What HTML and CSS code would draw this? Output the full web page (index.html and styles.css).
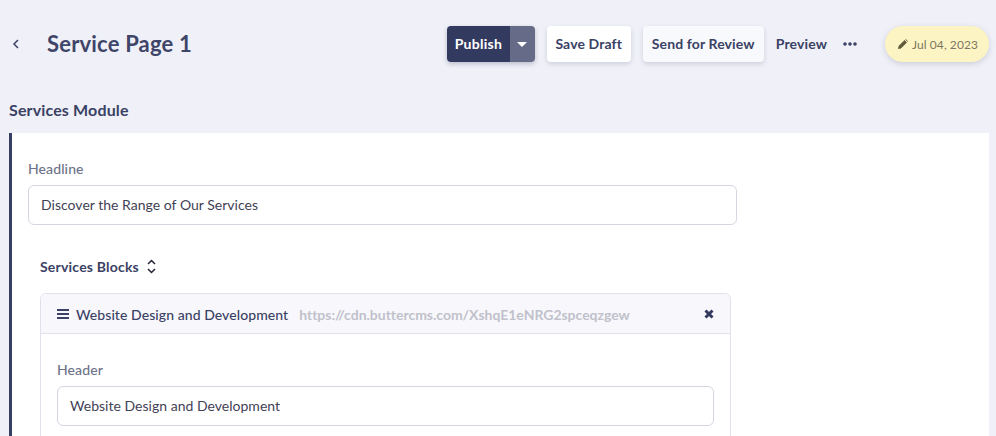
FILE: index.html
```html
<!DOCTYPE html>
<html lang="en">
<head>
<meta charset="utf-8">
<title>Service Page 1</title>
<link rel="stylesheet" href="styles.css">
</head>
<body>
<header class="topbar">
  <div class="title-group">
    <svg class="back" width="8" height="10" viewBox="0 0 8 10"><path d="M6 1 2 5l4 4" fill="none" stroke="#3a4164" stroke-width="1.5"/></svg>
    <h1 class="title">Service Page 1</h1>
  </div>
  <div class="actions">
    <div class="publish">
      <span class="publish-label">Publish</span>
      <span class="publish-caret"><svg width="10" height="5" viewBox="0 0 10 5"><path d="M0 0h10L5 5z" fill="#fff"/></svg></span>
    </div>
    <span class="btn btn-draft">Save Draft</span>
    <span class="btn btn-review">Send for Review</span>
    <span class="preview">Preview</span>
    <svg class="more" width="14" height="4" viewBox="0 0 14 4"><circle cx="2" cy="2" r="1.8" fill="#3a4164"/><circle cx="7" cy="2" r="1.8" fill="#3a4164"/><circle cx="12" cy="2" r="1.8" fill="#3a4164"/></svg>
    <div class="date-pill">
      <svg width="10" height="10" viewBox="0 0 10 10"><path d="M0 10l.6-2.9L6.6 1.1l2.3 2.3-6 6zM7.3.4l.5-.4 2.2 2.2-.5.5z" fill="#5f5a3c"/></svg>
      <span>Jul 04, 2023</span>
    </div>
  </div>
</header>
<h2 class="module-title">Services Module</h2>
<main class="card">
  <label class="field-label">Headline</label>
  <div class="input input-wide">Discover the Range of Our Services</div>
  <div class="blocks-head">
    <span>Services Blocks</span>
    <svg class="sort" width="9" height="15" viewBox="0 0 9 15"><path d="M1 5l3.500-3.500L8 5M1 10l3.500 3.500L8 10" fill="none" stroke="#23243a" stroke-width="1.5"/></svg>
  </div>
  <section class="block">
    <div class="block-head">
      <svg width="12" height="10" viewBox="0 0 12 10"><path d="M0 1h12M0 5h12M0 9h12" stroke="#3a4164" stroke-width="1.8"/></svg>
      <span class="block-name">Website Design and Development</span>
      <span class="block-url">https://cdn.buttercms.com/XshqE1eNRG2spceqzgew</span>
      <svg class="close" width="10" height="10" viewBox="0 0 10 10"><path d="M1.500 1.500l7 7M8.500 1.500l-7 7" stroke="#333a5e" stroke-width="3"/></svg>
    </div>
    <div class="block-body">
      <label class="field-label">Header</label>
      <div class="input">Website Design and Development</div>
    </div>
  </section>
</main>
</body>
</html>
```
FILE: styles.css
```css
* { box-sizing: border-box; }
html, body { height: 100%; }
body {
  margin: 0;
  height: 436px;
  overflow: hidden;
  background: #f0f1f8;
  color: #3a4164;
  font-family: "Lato", "Open Sans", sans-serif;
}
.topbar {
  display: flex;
  align-items: center;
  justify-content: space-between;
  height: 88px;
  padding: 0 7px 0 12px;
}
.title-group { display: flex; align-items: center; gap: 27px; }
.back { display: block; }
.title { margin: 0 0 2px; font-size: 22px; font-weight: 700; color: #3f4569; letter-spacing: .18px; }
.actions { display: flex; align-items: center; }
.publish {
  display: flex;
  height: 36px;
  border-radius: 4px;
  overflow: hidden;
  box-shadow: 0 2px 5px rgba(58,65,100,.3);
  font-size: 14px;
  font-weight: 700;
  letter-spacing: .25px;
  color: #fff;
}
.publish-label { display: flex; align-items: center; width: 63px; padding: 0 0 2px 8px; background: #333a60; }
.publish-caret { display: flex; align-items: center; justify-content: center; width: 25px; background: #666c88; }
.btn {
  display: flex;
  align-items: center;
  justify-content: center;
  height: 36px;
  padding-bottom: 2px;
  background: #fff;
  border-radius: 4px;
  box-shadow: 0 2px 5px rgba(58,65,100,.2);
  font-size: 14px;
  font-weight: 700;
  letter-spacing: .12px;
}
.btn-draft { width: 84px; margin-left: 12px; }
.btn-review { width: 121px; margin-left: 12px; background: #f8f9fd; }
.preview { margin: 0 0 2px 12px; font-size: 14px; font-weight: 700; letter-spacing: .12px; }
.more { margin-left: 16px; }
.date-pill {
  display: flex;
  align-items: center;
  gap: 4px;
  width: 104px;
  height: 36px;
  margin-left: 28px;
  padding-left: 13px;
  border-radius: 18px;
  background: #fdf4c3;
  box-shadow: 0 2px 6px rgba(58,65,100,.2);
  font-size: 12px;
  letter-spacing: .08px;
  color: #7b7862;
}
.module-title { margin: 0 0 0 9px; height: 45px; font-size: 16px; font-weight: 700; line-height: 43px; letter-spacing: .14px; }
.card {
  margin: 0 7px 0 9px;
  padding: 28px 0 0 16px;
  height: 320px;
  overflow: hidden;
  background: #fff;
  border-left: 3px solid #373e62;
}
.field-label { display: block; font-size: 14px; font-weight: 500; line-height: 15px; letter-spacing: .1px; color: #6d7289; margin-bottom: 9px; }
.input {
  display: flex;
  align-items: center;
  height: 40px;
  padding: 0 0 2px 12px;
  border: 1px solid #d5d6e2;
  border-radius: 6px;
  background: #fff;
  font-size: 14px;
  letter-spacing: .02px;
  color: #3f4256;
}
.input-wide { width: 709px; }
.blocks-head {
  display: flex;
  align-items: center;
  gap: 8px;
  margin: 32px 0 0 12px;
  height: 18px;
  font-size: 14px;
  font-weight: 700;
  letter-spacing: .2px;
}
.block {
  width: 691px;
  margin: 18px 0 0 12px;
  border: 1px solid #e1e2ec;
  border-radius: 6px 6px 0 0;
}
.block-head {
  display: flex;
  align-items: center;
  height: 40px;
  padding: 0 16px;
  background: #f8f8fc;
  border-bottom: 1px solid #e1e2ec;
  border-radius: 6px 6px 0 0;
  font-size: 14px;
}
.block-name { margin-left: 7px; padding-top: 1px; font-weight: 500; letter-spacing: .07px; }
.block-url { margin-left: 11px; padding-top: 1px; font-weight: 700; letter-spacing: -.02px; color: #c0c1cb; }
.close { margin-left: auto; }
.block-body { padding: 28px 16px 0; height: 120px; }
```
